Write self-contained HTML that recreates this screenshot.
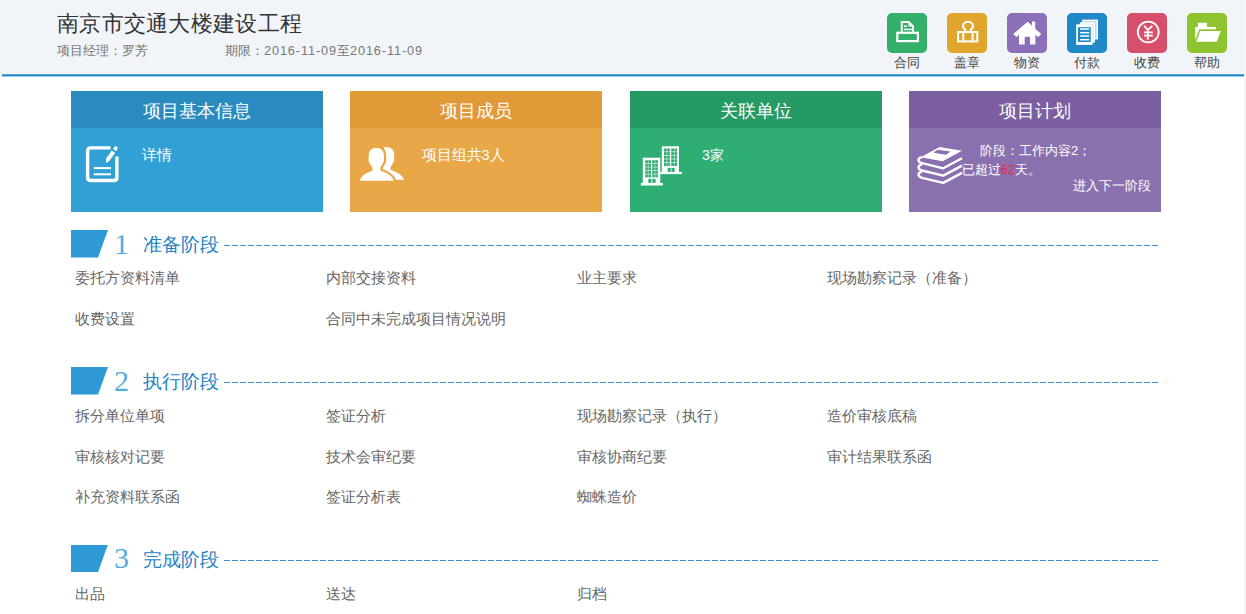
<!DOCTYPE html>
<html><head><meta charset="utf-8">
<style>
*{margin:0;padding:0;box-sizing:border-box}
html,body{width:1246px;height:614px;overflow:hidden;background:#fff;font-family:"Liberation Sans",sans-serif}
.abs{position:absolute;white-space:nowrap}
#hdr{position:absolute;left:0;top:0;width:1246px;height:74px;background:#f1f5fa}
#hline{position:absolute;left:2px;top:74px;width:1242px;height:3px;background:linear-gradient(#5ba8d8 0,#5ba8d8 1px,#1a84c6 1px,#1a84c6 2px,#a9d0ea 2px,#a9d0ea 3px)}
#hdr .lb{position:absolute;left:0;top:0;width:2px;height:74px;background:#f3f3f5}
#hdr .rb{position:absolute;left:1244px;top:0;width:2px;height:614px;background:#eef0f3}
.title{left:57px;top:11px;font-size:22px;color:#333;line-height:26px;letter-spacing:0.3px}
.sub{top:43px;font-size:12.7px;color:#777;line-height:16px}
.tb{position:absolute;top:13px;width:40px;height:40px;border-radius:5px}
.tl{position:absolute;top:55px;left:0;width:40px;text-align:center;font-size:13px;color:#444;line-height:16px}
.card{position:absolute;top:91px;width:252px;height:121px}
.card .ct{position:absolute;left:0;top:0;width:100%;height:37px;text-align:center;color:#fff;font-size:18px;line-height:40px}
.card .cb{position:absolute;left:0;top:37px;width:100%;height:84px}
.ctext{color:#fff;font-size:14px;line-height:16px}
.sec{position:absolute;left:0;width:1246px;height:30px}
.para{position:absolute;left:71px;top:0;width:37px;height:27.5px;background:#2d9ad6;clip-path:polygon(0 0,100% 0,73% 100%,0 100%)}
.num{position:absolute;left:114px;top:-3.5px;font-size:30px;color:#55abdf;font-family:"Liberation Serif",serif;font-weight:normal;line-height:34px}
.sname{position:absolute;left:143px;top:4px;font-size:18.5px;color:#1f84c6;line-height:22px}
.dash{position:absolute;left:224px;top:15px;width:935px;height:1px;background:repeating-linear-gradient(90deg,#3d8fd0 0,#3d8fd0 6px,transparent 6px,transparent 8px)}
.it{position:absolute;font-size:15px;color:#666;line-height:18px;white-space:nowrap}
</style></head>
<body>
<div id="hdr"><div class="lb"></div></div><div id="hline"></div>
<div class="abs title">南京市交通大楼建设工程</div>
<div class="abs sub" style="left:57px">项目经理：罗芳</div>
<div class="abs sub" style="left:225px">期限：<span style="letter-spacing:0.9px">2016-11-09</span>至<span style="letter-spacing:0.9px">2016-11-09</span></div>

<div class="tb" style="left:887px;background:#35b06a"></div>
<div class="tb" style="left:947px;background:#e0a52c"></div>
<div class="tb" style="left:1007px;background:#8b6fb8"></div>
<div class="tb" style="left:1067px;background:#1e88c8"></div>
<div class="tb" style="left:1127px;background:#d84f6c"></div>
<div class="tb" style="left:1187px;background:#8fc431"></div>
<div class="tl" style="left:887px">合同</div>
<div class="tl" style="left:947px">盖章</div>
<div class="tl" style="left:1007px">物资</div>
<div class="tl" style="left:1067px">付款</div>
<div class="tl" style="left:1127px">收费</div>
<div class="tl" style="left:1187px">帮助</div>

<div class="card" style="left:71px"><div class="ct" style="background:#2a8bbf">项目基本信息</div><div class="cb" style="background:#31a0d5"></div></div>
<div class="card" style="left:350px"><div class="ct" style="background:#e09a38">项目成员</div><div class="cb" style="background:#e8a847"></div></div>
<div class="card" style="left:630px"><div class="ct" style="background:#259a64">关联单位</div><div class="cb" style="background:#2eae73"></div></div>
<div class="card" style="left:909px;width:251.5px"><div class="ct" style="background:#7b5fa0">项目计划</div><div class="cb" style="background:#8b70b0"></div></div>

<div class="abs ctext" style="left:142px;top:146.5px;font-size:15px">详情</div>
<div class="abs ctext" style="left:421.5px;top:147px;font-size:14.6px">项目组共3人</div>
<div class="abs ctext" style="left:702px;top:147px">3家</div>
<div class="abs ctext" style="left:980px;top:142.5px;font-size:13px">阶段：工作内容2；</div>
<div class="abs ctext" style="left:961.5px;top:162px;font-size:13px">已超过<span style="color:#e8283a">62</span>天。</div>
<div class="abs ctext" style="left:1073px;top:177.5px;font-size:13px">进入下一阶段</div>

<div class="sec" style="top:230px"><div class="para"></div><div class="num">1</div><div class="sname">准备阶段</div><div class="dash"></div></div>
<div class="it" style="left:75px;top:269px">委托方资料清单</div>
<div class="it" style="left:326px;top:269px">内部交接资料</div>
<div class="it" style="left:577px;top:269px">业主要求</div>
<div class="it" style="left:827px;top:269px">现场勘察记录（准备）</div>
<div class="it" style="left:75px;top:310px">收费设置</div>
<div class="it" style="left:326px;top:310px">合同中未完成项目情况说明</div>

<div class="sec" style="top:367px"><div class="para"></div><div class="num">2</div><div class="sname">执行阶段</div><div class="dash"></div></div>
<div class="it" style="left:75px;top:407px">拆分单位单项</div>
<div class="it" style="left:326px;top:407px">签证分析</div>
<div class="it" style="left:577px;top:407px">现场勘察记录（执行）</div>
<div class="it" style="left:827px;top:407px">造价审核底稿</div>
<div class="it" style="left:75px;top:448px">审核核对记要</div>
<div class="it" style="left:326px;top:448px">技术会审纪要</div>
<div class="it" style="left:577px;top:448px">审核协商纪要</div>
<div class="it" style="left:827px;top:448px">审计结果联系函</div>
<div class="it" style="left:75px;top:488px">补充资料联系函</div>
<div class="it" style="left:326px;top:488px">签证分析表</div>
<div class="it" style="left:577px;top:488px">蜘蛛造价</div>

<div class="sec" style="top:544.5px"><div class="para"></div><div class="num">3</div><div class="sname">完成阶段</div><div class="dash"></div></div>
<div class="it" style="left:75px;top:585px">出品</div>
<div class="it" style="left:326px;top:585px">送达</div>
<div class="it" style="left:577px;top:585px">归档</div>
<div class="abs" style="left:1244px;top:0;width:2px;height:614px;background:#f3f5f7"></div>
<svg id="ov" width="1246" height="614" viewBox="0 0 1246 614" style="position:absolute;left:0;top:0">
<!-- 合同 printer -->
<g fill="none" stroke="#fff">
<rect x="897.3" y="32.8" width="20.6" height="8.3" stroke-width="2.2"/>
<path d="M901.75,31.7 V22 H908.6 L913,26.4 V31.7" stroke-width="2"/>
</g>
<path d="M908.5,21 L914,26.5 L908.5,26.5 Z" fill="#fff"/>
<rect x="904" y="25.5" width="3" height="1.5" fill="#fff"/>
<rect x="904" y="28.7" width="8.2" height="1.4" fill="#fff"/>
<!-- 盖章 clip -->
<g fill="none" stroke="#fff" stroke-width="2">
<rect x="958.1" y="32" width="19.2" height="9.4"/>
<line x1="963.25" y1="32" x2="963.25" y2="41.4"/>
<line x1="972.6" y1="32" x2="972.6" y2="41.4"/>
<path d="M965.2,31 V29.5 A5,4.3 0 1 1 970.8,29.5 V31"/>
</g>
<!-- 物资 house -->
<path d="M1027.6,21.7 L1032,25.5 V21.4 H1035.2 V28.85 L1041.3,34.1 L1038.1,37.1 L1035.4,34.8 V44.4 H1030 V37.5 Q1030,36.8 1029.3,36.8 H1025.4 Q1024.7,36.8 1024.7,37.5 V44.4 H1019 V34.8 L1016.4,37.1 L1013.2,34.1 Z" fill="#fff"/>
<!-- 付款 docs -->
<rect x="1082.2" y="19.6" width="15.8" height="19.8" fill="#fff"/>
<rect x="1083.7" y="21.1" width="12.8" height="16.8" fill="#bcd8ee"/>
<rect x="1079.8" y="22.25" width="15.1" height="20.35" fill="#fff"/>
<rect x="1081.3" y="23.75" width="12.1" height="17.35" fill="#bcd8ee"/>
<rect x="1076.2" y="24.3" width="16.4" height="20.6" fill="#fff"/>
<rect x="1078" y="27.2" width="12.75" height="14.8" fill="#1e88c8"/>
<g fill="#fff"><rect x="1080.1" y="28.25" width="9.1" height="1.5"/><rect x="1080.1" y="31.95" width="9.1" height="1.5"/><rect x="1080.1" y="35.25" width="9.1" height="1.5"/><rect x="1080.1" y="38.95" width="9.1" height="1.5"/></g>
<!-- 收费 yen -->
<g fill="none" stroke="#fff" stroke-width="1.8">
<circle cx="1148.25" cy="32" r="10.45"/>
<path d="M1144.2,25.8 L1147.8,30 L1152.3,25.8 M1147.8,30 V39.7 M1144,32.4 H1152.8 M1144,35.6 H1152.8"/>
</g>
<!-- 帮助 folder -->
<path d="M1195.2,39.9 V26.9 H1197.9 V22.8 H1207 V26.9 H1215.9 V29.3 H1199.3 Z" fill="#fff"/>
<path d="M1200.2,31 H1220.7 L1216.8,41.7 H1196.3 Z" fill="#fff"/>
<!-- card1 edit icon -->
<path d="M110.5,147.9 H90.6 Q87.6,147.9 87.6,150.9 V177.5 Q87.6,180.5 90.6,180.5 H113.9 Q116.9,180.5 116.9,177.5 V156.5" fill="none" stroke="#fff" stroke-width="3.4"/>
<path d="M106,163 L106,158.6 L111.9,150.6 L115.1,152.9 L109.2,160.9 Z" fill="#fff"/>
<path d="M113,148.8 L114.4,146.9 Q115.4,145.8 116.8,146.7 Q118.1,147.7 117.5,149 L116.1,151 Z" fill="#fff"/>
<rect x="93.8" y="167.1" width="17.2" height="2" fill="#fff"/>
<rect x="93.8" y="173.3" width="17.2" height="2" fill="#fff"/>
<!-- card2 people -->
<g transform="translate(10.2,-0.6)"><path d="M376.3,147.9 C381,147.9 384,150.5 384,156 C384,158 384.3,160.5 383.5,162 C382.5,164.5 381,166.5 380.4,167.5 V170.7 C386,172.5 392,175 393.8,180.4 H359.9 C361.5,175 367,172.5 372.6,170.7 V167.5 C371.5,166.5 370,164.5 369,162 C368.3,160.5 368.7,158 368.7,156 C368.7,150.5 371.5,147.9 376.3,147.9 Z" fill="#fff"/></g>
<path d="M376.3,147.9 C381,147.9 384,150.5 384,156 C384,158 384.3,160.5 383.5,162 C382.5,164.5 381,166.5 380.4,167.5 V170.7 C386,172.5 392,175 393.8,180.8 H359.9 C361.5,175 367,172.5 372.6,170.7 V167.5 C371.5,166.5 370,164.5 369,162 C368.3,160.5 368.7,158 368.7,156 C368.7,150.5 371.5,147.9 376.3,147.9 Z" fill="#fff" stroke="#e8a847" stroke-width="4.6" paint-order="stroke"/>
<rect x="355" y="181.3" width="60" height="4" fill="#e8a847"/>
<!-- card3 buildings -->
<g fill="#fff">
<rect x="661.8" y="146.3" width="17.2" height="25.8"/><rect x="660" y="171.9" width="22" height="2.2"/>
<rect x="642.8" y="157.7" width="17.5" height="25.3"/><rect x="640.9" y="182.9" width="22" height="2.6"/>
</g>
<g fill="#2eae73">
<rect x="645.30" y="160.20" width="2.6" height="3"/>
<rect x="648.35" y="160.20" width="2.6" height="3"/>
<rect x="652.20" y="160.20" width="2.6" height="3"/>
<rect x="655.25" y="160.20" width="2.6" height="3"/>
<rect x="645.30" y="163.75" width="2.6" height="3"/>
<rect x="648.35" y="163.75" width="2.6" height="3"/>
<rect x="652.20" y="163.75" width="2.6" height="3"/>
<rect x="655.25" y="163.75" width="2.6" height="3"/>
<rect x="645.30" y="167.30" width="2.6" height="3"/>
<rect x="648.35" y="167.30" width="2.6" height="3"/>
<rect x="652.20" y="167.30" width="2.6" height="3"/>
<rect x="655.25" y="167.30" width="2.6" height="3"/>
<rect x="645.30" y="170.85" width="2.6" height="3"/>
<rect x="648.35" y="170.85" width="2.6" height="3"/>
<rect x="652.20" y="170.85" width="2.6" height="3"/>
<rect x="655.25" y="170.85" width="2.6" height="3"/>
<rect x="645.30" y="174.40" width="2.6" height="3"/>
<rect x="648.35" y="174.40" width="2.6" height="3"/>
<rect x="652.20" y="174.40" width="2.6" height="3"/>
<rect x="655.25" y="174.40" width="2.6" height="3"/>
<rect x="648.3" y="178.9" width="3.2" height="4"/><rect x="652.4" y="178.9" width="3.2" height="4"/>
<rect x="664.00" y="148.50" width="2.7" height="3.05"/>
<rect x="667.20" y="148.50" width="2.7" height="3.05"/>
<rect x="671.20" y="148.50" width="2.7" height="3.05"/>
<rect x="674.40" y="148.50" width="2.7" height="3.05"/>
<rect x="664.00" y="152.10" width="2.7" height="3.05"/>
<rect x="667.20" y="152.10" width="2.7" height="3.05"/>
<rect x="671.20" y="152.10" width="2.7" height="3.05"/>
<rect x="674.40" y="152.10" width="2.7" height="3.05"/>
<rect x="664.00" y="155.70" width="2.7" height="3.05"/>
<rect x="667.20" y="155.70" width="2.7" height="3.05"/>
<rect x="671.20" y="155.70" width="2.7" height="3.05"/>
<rect x="674.40" y="155.70" width="2.7" height="3.05"/>
<rect x="664.00" y="159.30" width="2.7" height="3.05"/>
<rect x="667.20" y="159.30" width="2.7" height="3.05"/>
<rect x="671.20" y="159.30" width="2.7" height="3.05"/>
<rect x="674.40" y="159.30" width="2.7" height="3.05"/>
<rect x="664.00" y="162.90" width="2.7" height="3.05"/>
<rect x="667.20" y="162.90" width="2.7" height="3.05"/>
<rect x="671.20" y="162.90" width="2.7" height="3.05"/>
<rect x="674.40" y="162.90" width="2.7" height="3.05"/>
<rect x="667.7" y="167.9" width="3.1" height="4"/><rect x="671.5" y="167.9" width="3.1" height="4"/>
</g>
<!-- card4 books -->
<path d="M939.6,147 L962,150.7 L942.6,161.3 L920.6,157.3 Z" fill="#fff"/>
<path d="M937.4,149.8 L950.6,151.6 L946,154.7 L933.4,152.8 Z" fill="#8b70b0"/>
<g fill="none" stroke="#fff" stroke-width="2.4" stroke-linejoin="round">
<path d="M922,157.3 Q918.5,157.6 918.5,160 Q918.5,162.5 922,163.2 L943.3,168.3 L962,158.3"/>
<path d="M922,164.6 Q918.5,164.9 918.5,167.3 Q918.5,169.8 922,170.5 L943.3,175.6 L962,165.6"/>
<path d="M922,171.9 Q918.5,172.2 918.5,174.6 Q918.5,177.1 922,177.8 L943.3,182.9 L962,172.9"/>
</g>
</svg>
</body></html>
